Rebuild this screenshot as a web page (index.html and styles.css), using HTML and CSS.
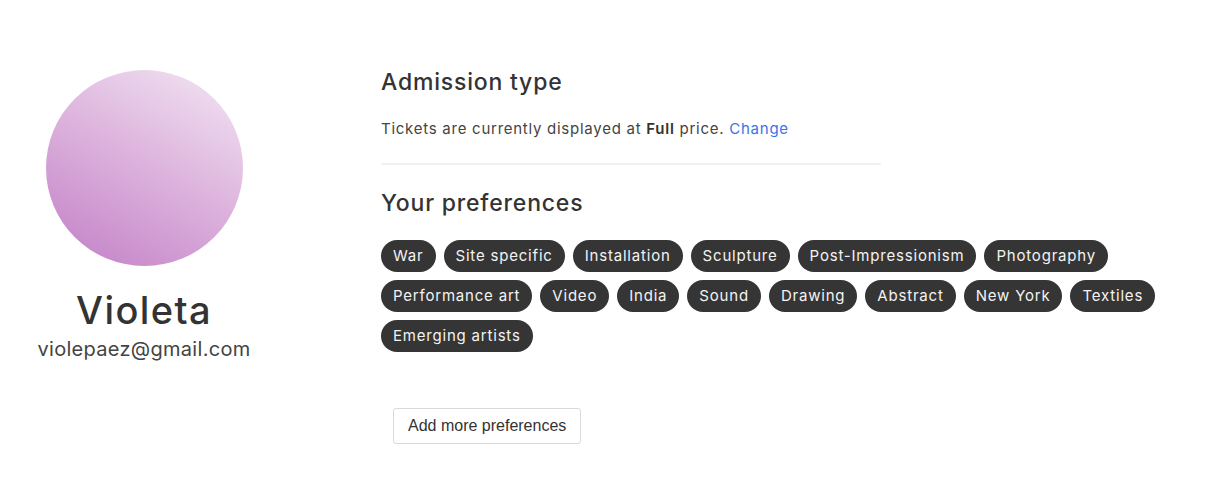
FILE: index.html
```html
<!DOCTYPE html>
<html lang="en">
<head>
<meta charset="utf-8">
<title>Profile</title>
<link rel="stylesheet" href="styles.css">
</head>
<body>
<div class="page">
  <aside class="profile">
    <div class="avatar"></div>
    <h1 class="name">Violeta</h1>
    <div class="email">violepaez@gmail.com</div>
  </aside>
  <main class="content">
    <section class="admission">
      <h2 class="heading">Admission type</h2>
      <p class="note">Tickets are currently displayed at <strong>Full</strong> price. <a href="#" class="link">Change</a></p>
    </section>
    <hr class="rule">
    <section class="prefs">
      <h2 class="heading">Your preferences</h2>
      <ul class="tags">
        <li class="tag">War</li>
        <li class="tag">Site specific</li>
        <li class="tag">Installation</li>
        <li class="tag">Sculpture</li>
        <li class="tag">Post-Impressionism</li>
        <li class="tag">Photography</li>
        <li class="tag">Performance art</li>
        <li class="tag">Video</li>
        <li class="tag">India</li>
        <li class="tag">Sound</li>
        <li class="tag">Drawing</li>
        <li class="tag">Abstract</li>
        <li class="tag">New York</li>
        <li class="tag">Textiles</li>
        <li class="tag">Emerging artists</li>
      </ul>
      <button class="add-btn" type="button">Add more preferences</button>
    </section>
  </main>
</div>
</body>
</html>
```

FILE: styles.css
```css
* { box-sizing: border-box; }
html, body { margin: 0; padding: 0; background: #fff; }
body {
  font-family: Inter, "Noto Sans", sans-serif;
  color: #333;
}
.page {
  display: flex;
  align-items: flex-start;
  padding-top: 68px;
}
.profile {
  width: 288px;
  padding-top: 2px;
  display: flex;
  flex-direction: column;
  align-items: center;
}
.avatar {
  width: 197px;
  height: 196px;
  border-radius: 50%;
  background: linear-gradient(30deg, #c17ec6 0%, #dcb1dc 50%, #f3e8f4 100%);
}
.name {
  margin: 22px 0 0;
  font-size: 38px;
  line-height: 44px;
  font-weight: 500;
  letter-spacing: 1.4px;
  color: #333;
}
.email {
  font-size: 20px;
  line-height: 26px;
  letter-spacing: 0.3px;
  color: #444;
  margin-top: 4px;
}
.content {
  margin-left: 93px;
  width: 800px;
}
.heading {
  margin: 0;
  font-size: 23px;
  line-height: 28px;
  font-weight: 500;
  letter-spacing: 0.8px;
  color: #333;
}
.note {
  margin: 22px 0 0;
  font-size: 15px;
  line-height: 22px;
  letter-spacing: 0.74px;
  color: #444;
}
.note strong { font-weight: 600; color: #333; }
.link { color: #3a74e8; text-decoration: none; }
.rule {
  width: 500px;
  margin: 23px 0 24px;
  border: 0;
  border-top: 2px solid #f1f1f1;
}
.tags {
  list-style: none;
  margin: 23px 0 0;
  padding: 0;
  display: flex;
  flex-wrap: wrap;
  gap: 8px;
  max-width: 790px;
}
.tag {
  height: 32px;
  line-height: 32px;
  padding: 0 12px;
  border-radius: 16px;
  background: #353535;
  color: #f3f3f3;
  font-size: 15px;
  letter-spacing: 0.8px;
}
.add-btn {
  margin: 56px 0 0 12px;
  height: 36px;
  padding: 0 14px;
  background: #fff;
  border: 1px solid #d9d9d9;
  border-radius: 3px;
  font-family: "Liberation Sans", Arial, sans-serif;
  font-size: 16px;
  color: #333;
}
```
